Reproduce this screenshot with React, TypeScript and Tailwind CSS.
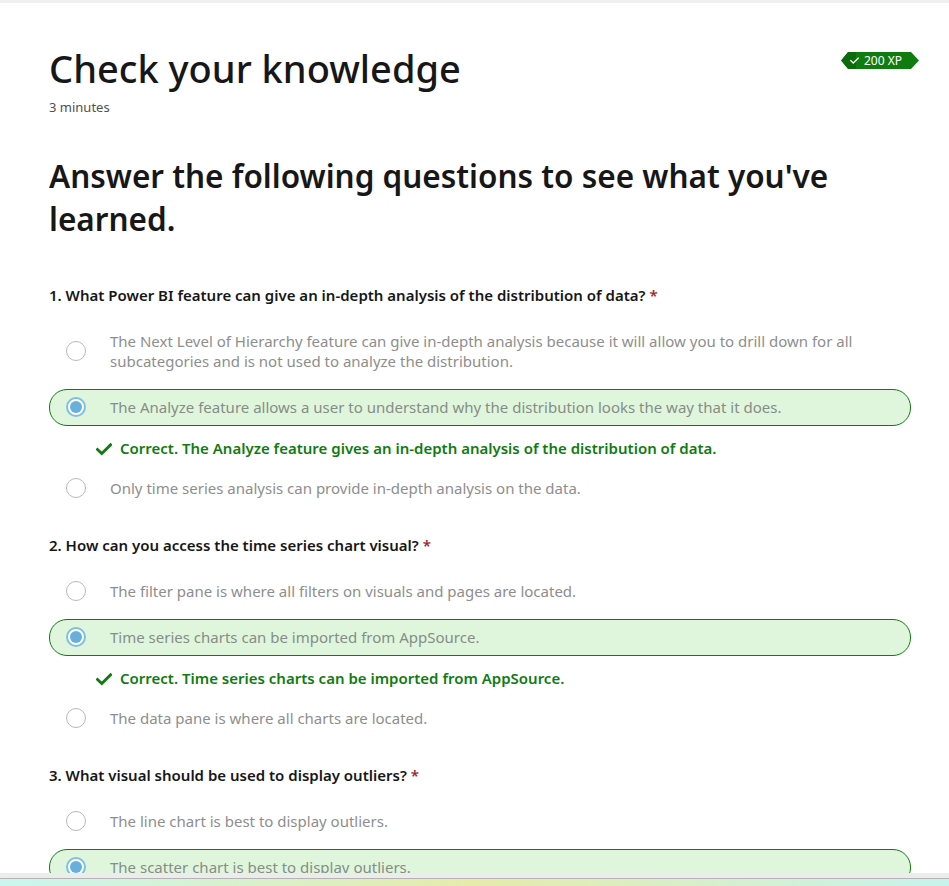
import type { ReactNode } from "react";

type Option = {
    text: ReactNode;
    selected?: boolean;
};

type Question = {
    title: string;
    options: Option[];
    feedback: string;
};

const QUESTIONS: Question[] = [
    {
        title: "1. What Power BI feature can give an in-depth analysis of the distribution of data?",
        options: [
            {
                text: "The Next Level of Hierarchy feature can give in-depth analysis because it will allow you to drill down for all subcategories and is not used to analyze the distribution.",
            },
            {
                text: "The Analyze feature allows a user to understand why the distribution looks the way that it does.",
                selected: true,
            },
            { text: "Only time series analysis can provide in-depth analysis on the data." },
        ],
        feedback: "Correct. The Analyze feature gives an in-depth analysis of the distribution of data.",
    },
    {
        title: "2. How can you access the time series chart visual?",
        options: [
            { text: "The filter pane is where all filters on visuals and pages are located." },
            { text: "Time series charts can be imported from AppSource.", selected: true },
            { text: "The data pane is where all charts are located." },
        ],
        feedback: "Correct. Time series charts can be imported from AppSource.",
    },
    {
        title: "3. What visual should be used to display outliers?",
        options: [
            { text: "The line chart is best to display outliers." },
            { text: "The scatter chart is best to display outliers.", selected: true },
            { text: "The bar chart is best to display outliers." },
        ],
        feedback: "Correct. The scatter chart is best to display outliers.",
    },
];

function Radio({ selected }: { selected?: boolean }) {
    if (selected) {
        return (
            <span className="flex h-5 w-5 shrink-0 items-center justify-center rounded-full border-2 border-[#7cc0e6] bg-white">
                <span className="h-[12px] w-[12px] rounded-full bg-[#68b0dc]" />
            </span>
        );
    }

    return <span className="h-5 w-5 shrink-0 rounded-full border border-[#b8b8b8] bg-white" />;
}

function CheckMark({ className, width = 2.4 }: { className?: string; width?: number }) {
    return (
        <svg viewBox="0 0 16 16" className={className} aria-hidden="true">
            <path
                d="M1.5 8.4 5.8 12.6 14.6 3.8"
                fill="none"
                stroke="currentColor"
                strokeWidth={width}
                strokeLinecap="square"
            />
        </svg>
    );
}

function XpBadge() {
    return (
        <div className="relative mt-[8px] flex h-[17px] w-[78px] items-center bg-[#107c10] pl-[9px] text-white [clip-path:polygon(7px_0,calc(100%_-_8px)_0,100%_50%,calc(100%_-_8px)_100%,7px_100%,0_50%)]">
            <span className="absolute left-0 top-0 h-[17px] w-[15px] bg-[#0b6a0b] [clip-path:polygon(7px_0,100%_0,100%_100%,7px_100%,0_50%)]" />
            <CheckMark className="relative h-[9px] w-[9px] text-white" />
            <span className="relative ml-[5px] text-[12px] leading-none">200 XP</span>
        </div>
    );
}

function QuestionBlock({ question }: { question: Question }) {
    return (
        <div className="mb-[28px]">
            <p className="mb-[17px] text-[15px] font-semibold leading-5 text-[#171717]">
                {question.title} <span className="text-[#a4262c]">*</span>
            </p>
            <div className="flex flex-col gap-[9px]">
                {question.options.map((option, index) => (
                    <div key={index} className="flex flex-col gap-[9px]">
                        <div
                            className={
                                option.selected
                                    ? "flex items-center gap-6 rounded-[18px] border border-[#107c10] bg-[#dff6dd] py-[7.5px] pl-[16px] pr-6"
                                    : "flex items-center gap-6 rounded-[18px] border border-transparent py-2 pl-[16px] pr-6"
                            }
                        >
                            <Radio selected={option.selected} />
                            <span
                                className={
                                    option.selected
                                        ? "text-[15px] leading-5 text-[#868d86]"
                                        : "text-[15px] leading-5 text-[#8e8e8e]"
                                }
                            >
                                {option.text}
                            </span>
                        </div>
                        {option.selected && (
                            <div className="flex h-[25px] items-center gap-[8px] pl-[47px] pt-[3px] text-[15px] font-semibold text-[#107c10]">
                                <CheckMark className="h-[16px] w-[16px] text-[#107c10]" width={2.8} />
                                <span>{question.feedback}</span>
                            </div>
                        )}
                    </div>
                ))}
            </div>
        </div>
    );
}

export default function App() {
    return (
        <div className="min-h-screen bg-white font-['Segoe_UI','Noto_Sans',sans-serif]">
            <div className="h-[3px] bg-[#efefef]" />

            <main className="ml-[49px] w-[870px] pt-[41px]">
                <div className="flex items-start justify-between">
                    <h1 className="text-[38px] font-medium leading-[48px] text-[#171717]">Check your knowledge</h1>
                    <XpBadge />
                </div>
                <p className="mt-[6px] text-[13px] text-[#505050]">3 minutes</p>

                <h2 className="mt-[36px] w-[862px] text-[31.5px] font-semibold leading-[43px] text-[#171717]">
                    Answer the following questions to see what you've learned.
                </h2>

                <div className="mt-[45px] w-[862px]">
                    {QUESTIONS.map((question) => (
                        <QuestionBlock key={question.title} question={question} />
                    ))}
                </div>
            </main>

            {/* bottom edge of the window */}
            <div className="fixed bottom-0 left-0 right-0">
                <div className="h-[5px] bg-[#ececec]" />
                <div className="h-[1px] bg-[#b4b4b4]" />
                <div className="h-[7px] bg-gradient-to-r from-[#c9f6ef] via-[#e6eba8] to-[#c6f3ec]" />
            </div>
        </div>
    );
}
